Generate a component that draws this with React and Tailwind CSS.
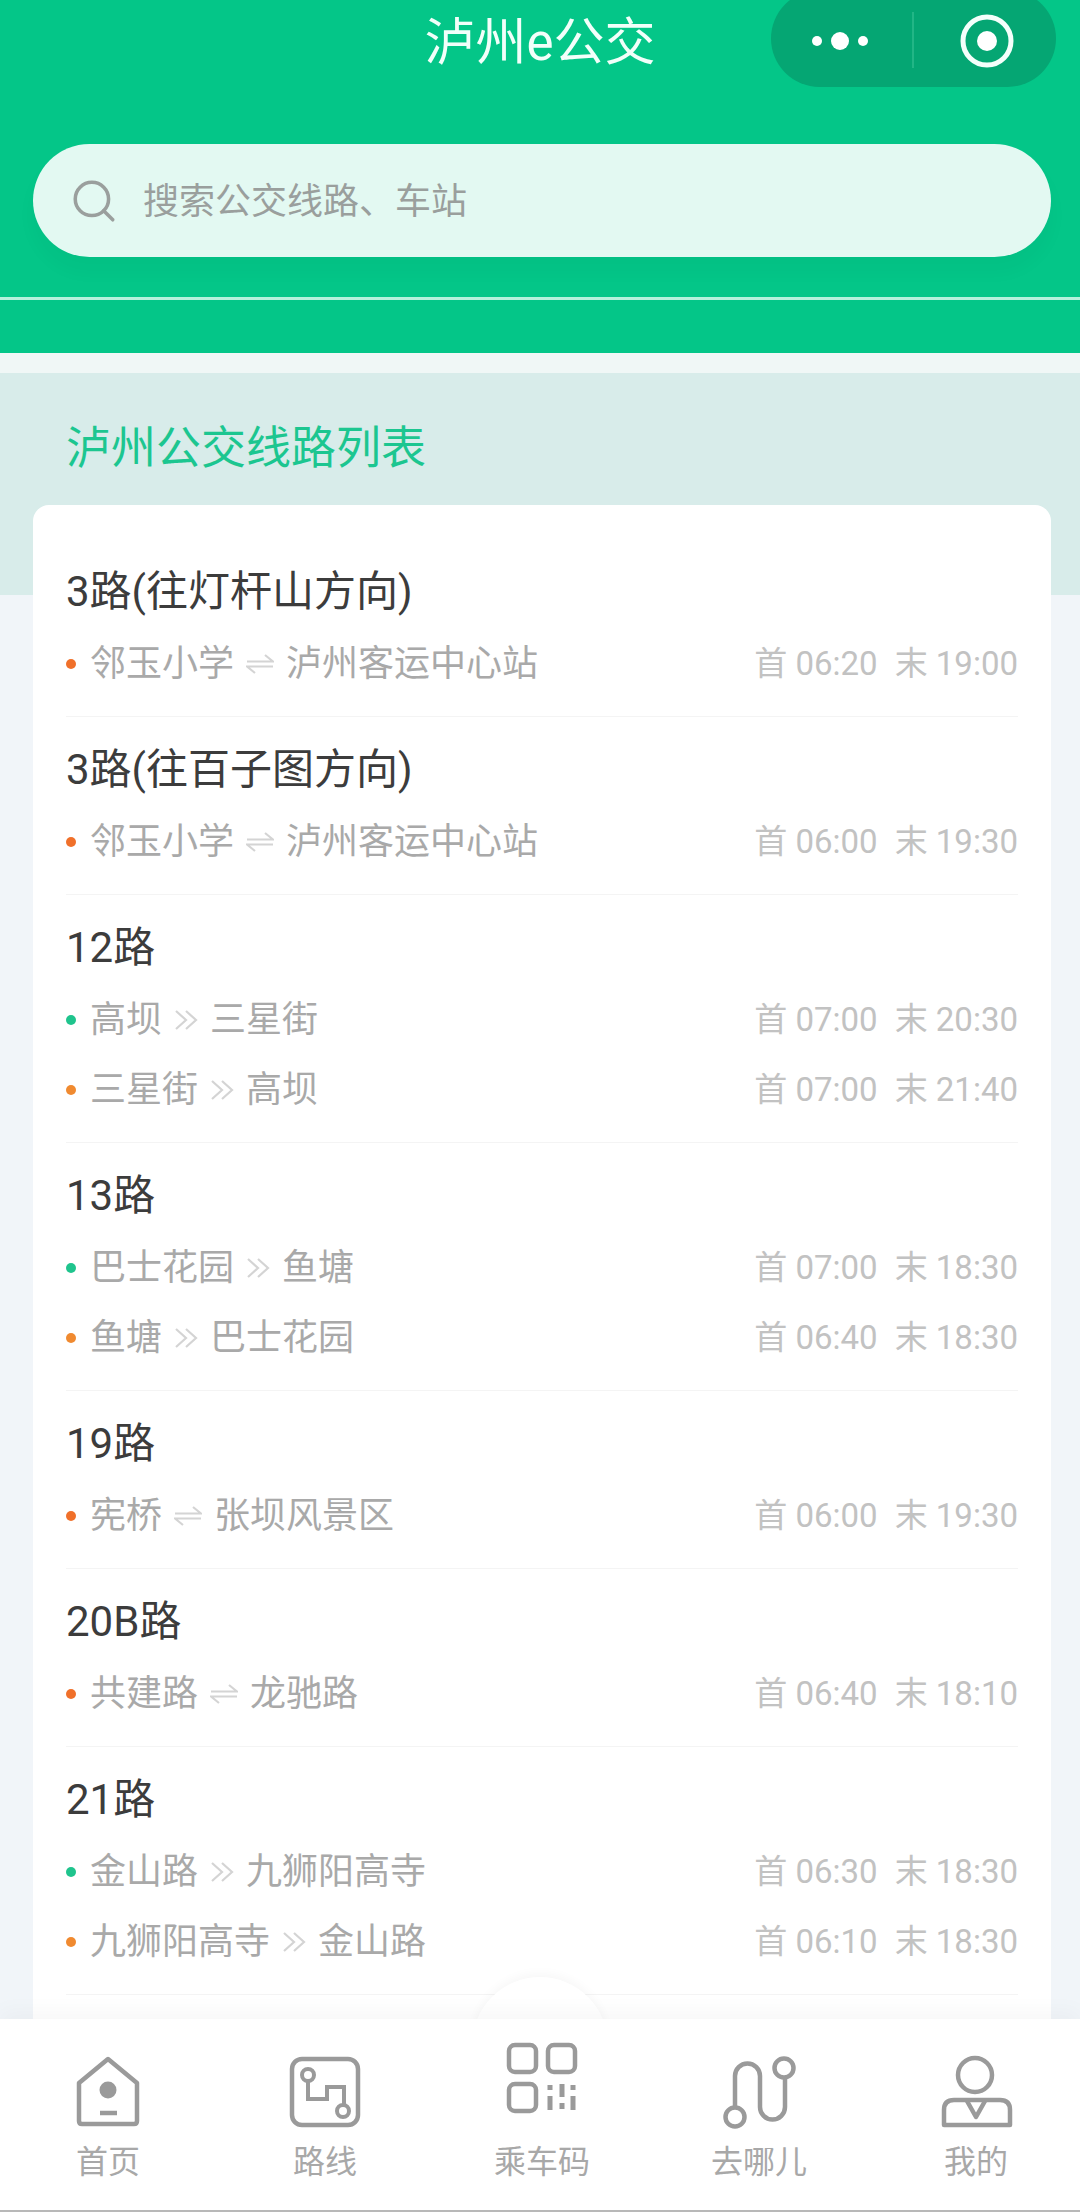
import { Search } from 'lucide-react'

const FONT = 'font-["Roboto","Noto_Sans_CJK_SC",sans-serif]'

const lines = [
  { name: '3路(往灯杆山方向)', dirs: [{ color: 'bg-[#f0702a]', from: '邻玉小学', to: '泸州客运中心站', loop: true, first: '06:20', last: '19:00' }] },
  { name: '3路(往百子图方向)', dirs: [{ color: 'bg-[#f0702a]', from: '邻玉小学', to: '泸州客运中心站', loop: true, first: '06:00', last: '19:30' }] },
  {
    name: '12路',
    dirs: [
      { color: 'bg-[#1fc48d]', from: '高坝', to: '三星街', first: '07:00', last: '20:30' },
      { color: 'bg-[#f08a30]', from: '三星街', to: '高坝', first: '07:00', last: '21:40' },
    ],
  },
  {
    name: '13路',
    dirs: [
      { color: 'bg-[#1fc48d]', from: '巴士花园', to: '鱼塘', first: '07:00', last: '18:30' },
      { color: 'bg-[#f08a30]', from: '鱼塘', to: '巴士花园', first: '06:40', last: '18:30' },
    ],
  },
  { name: '19路', dirs: [{ color: 'bg-[#f0702a]', from: '宪桥', to: '张坝风景区', loop: true, first: '06:00', last: '19:30' }] },
  { name: '20B路', dirs: [{ color: 'bg-[#f0702a]', from: '共建路', to: '龙驰路', loop: true, first: '06:40', last: '18:10' }] },
  {
    name: '21路',
    dirs: [
      { color: 'bg-[#1fc48d]', from: '金山路', to: '九狮阳高寺', first: '06:30', last: '18:30' },
      { color: 'bg-[#f08a30]', from: '九狮阳高寺', to: '金山路', first: '06:10', last: '18:30' },
    ],
  },
]

function LoopArrow() {
  return (
    <svg viewBox="0 0 28 22" className="w-[28px] h-[22px] shrink-0" fill="none" stroke="#d4d4d4" strokeWidth="2.2">
      <path d="M1 8.5H27L19 2" />
      <path d="M27 13.5H1L9 20" />
    </svg>
  )
}

function OneWayArrow() {
  return (
    <svg viewBox="0 0 24 24" className="w-[24px] h-[24px] shrink-0" fill="none" stroke="#d4d4d4" strokeWidth="2.2">
      <path d="M2 3L12 12L2 21" />
      <path d="M12 3L22 12L12 21" />
    </svg>
  )
}

function Direction({ dir }) {
  return (
    <div className="flex items-center h-[70px]">
      <span className={`w-[10px] h-[10px] rounded-full mr-[14px] ${dir.color}`} />
      <span className="text-[36px] text-[#a9a9a9]">{dir.from}</span>
      <span className="mx-[12px]">{dir.loop ? <LoopArrow /> : <OneWayArrow />}</span>
      <span className="text-[36px] text-[#a9a9a9]">{dir.to}</span>
      <span className="ml-auto text-[33px] text-[#c2c2c2] whitespace-nowrap">
        首 {dir.first}
        <span className="ml-[17px]">末 {dir.last}</span>
      </span>
    </div>
  )
}

function Line({ line }) {
  return (
    <div className="pt-[25px] pb-[17px] border-b border-[#f4f4f4]">
      <div className="h-[56px] leading-[56px] text-[42px] text-[#3c3c3c]">{line.name}</div>
      <div className="mt-[9px]">
        {line.dirs.map(d => (
          <Direction key={d.from} dir={d} />
        ))}
      </div>
    </div>
  )
}

const navIcon = 'w-[80px] h-[90px]'

function HomeIcon() {
  return (
    <svg viewBox="0 -10 80 90" className={navIcon} fill="none" stroke="#9a9a9a" strokeWidth="4.5" strokeLinejoin="round">
      <path d="M40 9L11 33V71Q11 74 14 74H66Q69 74 69 71V33Z" />
      <circle cx="40" cy="40" r="8.5" fill="#9a9a9a" stroke="none" />
      <path d="M32 63H49" />
    </svg>
  )
}

function RouteIcon() {
  return (
    <svg viewBox="0 -10 80 90" className={navIcon} fill="none" stroke="#9a9a9a" strokeWidth="4.5">
      <rect x="7" y="9" width="66" height="66" rx="10" />
      <circle cx="23" cy="25" r="6" strokeWidth="4" />
      <path d="M23 31V49H42V37H59V55" strokeWidth="4" />
      <circle cx="58" cy="61" r="6" strokeWidth="4" />
    </svg>
  )
}

function QrIcon() {
  return (
    <svg viewBox="0 -10 80 90" className={navIcon} fill="none" stroke="#9a9a9a" strokeWidth="4.5">
      <rect x="7" y="-5" width="27" height="27" rx="6" />
      <rect x="46" y="-5" width="27" height="27" rx="6" />
      <rect x="7" y="34" width="27" height="27" rx="6" />
      <path d="M48 35V40M48 46V60M60 34V47M60 53V59M71 35V40M71 46V60" strokeWidth="5" />
    </svg>
  )
}

function GoIcon() {
  return (
    <svg viewBox="0 -10 80 90" className={navIcon} fill="none" stroke="#9a9a9a" strokeWidth="4.5">
      <circle cx="16" cy="67" r="9.5" />
      <circle cx="65" cy="18" r="9.5" />
      <path d="M16 57V26A12.5 12.5 0 0 1 41 26V57A12.5 12.5 0 0 0 66 57V28" />
    </svg>
  )
}

function MineIcon() {
  return (
    <svg viewBox="0 -10 80 90" className={navIcon} fill="none" stroke="#9a9a9a" strokeWidth="4.5" strokeLinejoin="round">
      <circle cx="39" cy="25" r="17" />
      <path d="M8 75V60Q8 50 18 50H64Q74 50 74 60V75Z" />
      <path d="M31 51L40 67L49 51" />
    </svg>
  )
}

const navItems = [
  { label: '首页', Icon: HomeIcon },
  { label: '路线', Icon: RouteIcon },
  { label: '乘车码', Icon: QrIcon },
  { label: '去哪儿', Icon: GoIcon },
  { label: '我的', Icon: MineIcon },
]

export default function App() {
  return (
    <div className={`relative h-[2212px] overflow-hidden bg-[#f1f5f9] ${FONT}`}>
      {/* Header */}
      <div className="bg-[#04c688]">
        <div className="h-[86px] flex items-center justify-center text-[51px] text-[#f2fffa]">泸州e公交</div>
        <div className="ml-[33px] mr-[29px] mt-[58px] h-[113px] rounded-full bg-[#e3f9f2] flex items-center pl-[36px] shadow-[0_14px_20px_rgba(0,0,0,0.03)]">
          <Search size={50} strokeWidth={1.7} className="text-[#9a9f9d] shrink-0" />
          <span className="ml-[24px] pt-[3px] text-[36px] text-[#9a9f9d]">搜索公交线路、车站</span>
        </div>
        <div className="mt-[40px] h-[3px] bg-[#b5f1dc]" />
        <div className="h-[53px]" />
      </div>

      {/* capsule */}
      <div className="absolute left-[771px] top-[-10px] w-[285px] h-[97px] rounded-full bg-[#05a673]">
        <svg viewBox="0 0 285 97" className="w-full h-full">
          <circle cx="46" cy="51" r="5" fill="#fff" />
          <circle cx="69" cy="51" r="9" fill="#fff" />
          <circle cx="92" cy="51" r="5" fill="#fff" />
          <path d="M142 22V78" stroke="#2cbb8c" strokeWidth="1.5" />
          <circle cx="216" cy="51" r="24" fill="none" stroke="#f4fffb" strokeWidth="5" />
          <circle cx="216" cy="51" r="10" fill="#fff" />
        </svg>
      </div>

      <div className="h-[20px] bg-[#f0f7f6]" />
      <div className="h-[222px] bg-[#d8ecea] pt-[48px] pl-[66px]">
        <div className="h-[56px] leading-[56px] text-[45px] text-[#1cc690]">泸州公交线路列表</div>
      </div>

      {/* Line list */}
      <div className="relative ml-[33px] mr-[29px] -mt-[90px] bg-white rounded-[16px] pt-[34px] pl-[33px] pr-[33px] pb-[40px]">
        {lines.map(l => (
          <Line key={l.name} line={l} />
        ))}
      </div>

      {/* Tab bar */}
      <div className="absolute left-[472px] top-[1977px] w-[136px] h-[136px] rounded-full bg-white shadow-[0_-4px_10px_rgba(0,0,0,0.03)]" />
      <div className="absolute left-0 right-0 bottom-0 h-[193px] bg-white border-b-2 border-[#b8b8b8] pt-[21px] pl-[38px] pr-[34px] flex justify-between shadow-[0_-8px_20px_rgba(0,0,0,0.03)]">
        {navItems.map(({ label, Icon }) => (
          <div key={label} className="w-[140px] flex flex-col items-center">
            <Icon />
            <div className="mt-[12px] h-[40px] leading-[40px] text-[32px] text-[#a8a8a8]">{label}</div>
          </div>
        ))}
      </div>
    </div>
  )
}
